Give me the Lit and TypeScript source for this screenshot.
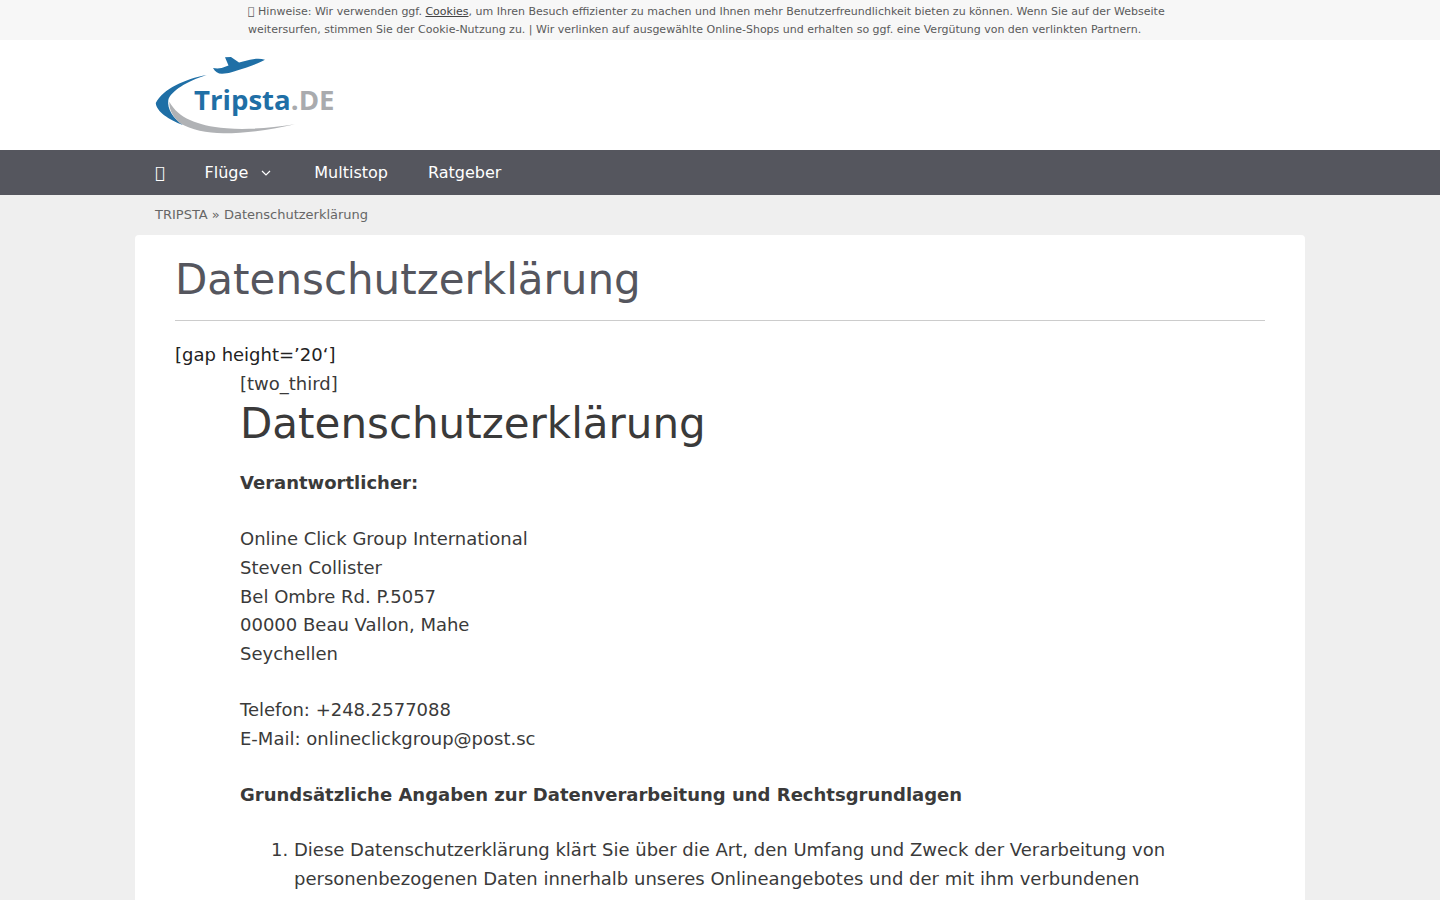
import { LitElement, html, css } from "lit";
import { customElement } from "lit/decorators.js";

@customElement("app-root")
export class AppRoot extends LitElement {
  static styles = css`
    :host { display: block; height: 900px; overflow: hidden; background: #efefef; font-family: "DejaVu Sans", sans-serif; color: #3a3a3a; font-size: 18px; line-height: 1.6; }
    * { box-sizing: border-box; }
    .notice { height: 40px; background: #f7f7f7; padding: 3px 248px 0; font-size: 11px; line-height: 18px; color: #5a5a5a; white-space: nowrap; }
    .notice a { color: #444; text-decoration: underline; }
    .header { height: 110px; background: #fff; padding: 15px 0 0 155px; }
    .logo { display: block; width: 182px; height: 80px; }
    .logo text { font-family: "Open Sans", sans-serif; font-weight: 700; font-size: 27.6px; }
    .nav { height: 45px; background: #55565e; display: flex; align-items: center; padding-left: 155px; color: #fff; font-size: 16px; line-height: 45px; }
    .nav a { display: flex; align-items: center; padding-right: 40px; }
    .nav .home { width: 49.5px; padding: 0; }
    .nav .drop { padding-right: 41px; }
    .nav svg { margin-left: 11px; }
    .crumbs { height: 40px; padding-left: 155px; font-size: 13px; line-height: 39px; color: #666; }
    .card { margin: 0 135px; background: #fff; border-radius: 4px 4px 0 0; padding: 17px 40px 0; height: 665px; }
    h1 { margin: 0; font-size: 42px; font-weight: 400; line-height: 56px; }
    .title { color: #55565e; padding-bottom: 12px; border-bottom: 1px solid #ccc; margin-bottom: 19px; }
    .gap { line-height: 29px; color: #222; }
    .content { margin-left: 65px; }
    .content .sc { line-height: 29px; }
    .content h1 { color: #3a3a3a; margin: -2px 0 17.2px; }
    p { margin: 0 0 27px; }
    ol { margin: 0; padding: 0 0 0 54px; }
  `;

  render() {
    return html`
      <div class="notice">\uf05a Hinweise: Wir verwenden ggf. <a>Cookies</a>, um Ihren Besuch effizienter zu machen und Ihnen mehr Benutzerfreundlichkeit bieten zu können. Wenn Sie auf der Webseite<br>weitersurfen, stimmen Sie der Cookie-Nutzung zu. | Wir verlinken auf ausgewählte Online-Shops und erhalten so ggf. eine Vergütung von den verlinkten Partnern.</div>
      <div class="header">
        <svg class="logo" viewBox="0 0 182 80">
          <path fill="#1f6fa6" d="M58 13 C60 16.5 63 18.8 67 18.8 C74 18.6 78 17 82 15.6 C92 12.4 103 8.8 110 4.8 C105 3 100 3.6 95 4.8 L84 7.4 L76 2 L70 2.2 L73.5 10.6 L66.7 13 C63 13.8 60 13.4 58 13 Z"/>
          <path fill="#1f6fa6" d="M51.7 20 C30 24 8 34 0.8 48 C1 56 14 65 28 70 C18 63 12 54 13.3 45 C16 36 32 26 51.7 20 Z"/>
          <path fill="#b0b2b5" d="M14.3 46.7 C14 55 18 62 25 68.3 C36 75 52 78 68.3 78.3 C95 78 120 74 140 69.3 C115 73 92 75 71.7 73.3 C55 72 44 69 35 65 C26 61 19 55 14.3 46.7 Z"/>
          <text x="39" y="55" fill="#1f6fa6">Tripsta<tspan fill="#a9abae">.DE</tspan></text>
        </svg>
      </div>
      <div class="nav">
        <a class="home">\uf015</a>
        <a class="drop">Flüge<svg width="14" height="14" viewBox="0 0 14 14" fill="none" stroke="#fff" stroke-width="1.2"><path d="M3 5 7 9l4-4"/></svg></a>
        <a>Multistop</a>
        <a>Ratgeber</a>
      </div>
      <div class="crumbs">TRIPSTA » Datenschutzerklärung</div>
      <div class="card">
        <h1 class="title">Datenschutzerklärung</h1>
        <div class="gap">[gap height=’20‘]</div>
        <div class="content">
          <div class="sc">[two_third]</div>
          <h1>Datenschutzerklärung</h1>
          <p><b>Verantwortlicher:</b></p>
          <p>Online Click Group International<br>Steven Collister<br>Bel Ombre Rd. P.5057<br>00000 Beau Vallon, Mahe<br>Seychellen</p>
          <p>Telefon: +248.2577088<br>E-Mail: onlineclickgroup@post.sc</p>
          <p><b>Grundsätzliche Angaben zur Datenverarbeitung und Rechtsgrundlagen</b></p>
          <ol><li>Diese Datenschutzerklärung klärt Sie über die Art, den Umfang und Zweck der Verarbeitung von personenbezogenen Daten innerhalb unseres Onlineangebotes und der mit ihm verbundenen</li></ol>
        </div>
      </div>
    `;
  }
}
